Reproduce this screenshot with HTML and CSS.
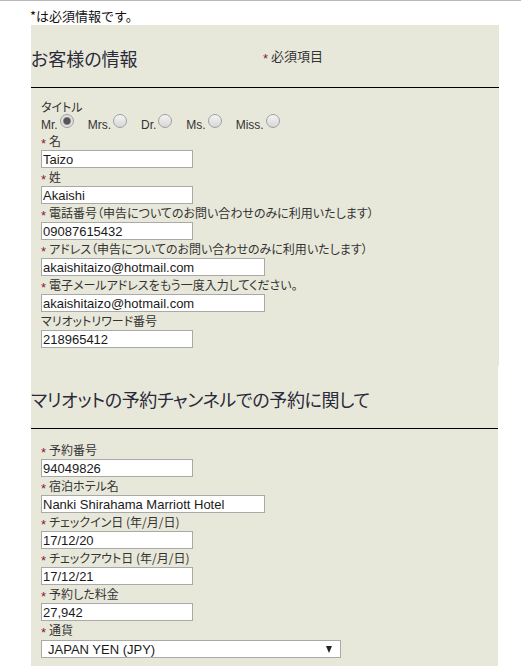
FILE: index.html
```html
<!DOCTYPE html>
<html lang="ja">
<head>
<meta charset="utf-8">
<title>お客様の情報</title>
<link rel="stylesheet" href="styles.css">
</head>
<body>
<p class="intro">*は必須情報です。</p>
<div class="panel">
  <section class="sec sec1">
    <div class="sec-head">
      <h2>お客様の情報</h2>
      <span class="req-note"><span class="ast">*</span>必須項目</span>
    </div>
    <div class="sec-body">
      <div class="label">タイトル</div>
      <div class="radios">
        <label class="opt"><span>Mr.</span><input type="radio" name="title" checked></label>
        <label class="opt"><span>Mrs.</span><input type="radio" name="title"></label>
        <label class="opt"><span>Dr.</span><input type="radio" name="title"></label>
        <label class="opt"><span>Ms.</span><input type="radio" name="title"></label>
        <label class="opt"><span>Miss.</span><input type="radio" name="title"></label>
      </div>
      <div class="label"><span class="ast">*</span>名</div>
      <input class="inp" type="text" value="Taizo">
      <div class="label"><span class="ast">*</span>姓</div>
      <input class="inp" type="text" value="Akaishi">
      <div class="label"><span class="ast">*</span>電話番号（申告についてのお問い合わせのみに利用いたします）</div>
      <input class="inp" type="text" value="09087615432">
      <div class="label"><span class="ast">*</span>アドレス（申告についてのお問い合わせのみに利用いたします）</div>
      <input class="inp wide" type="text" value="akaishitaizo@hotmail.com">
      <div class="label"><span class="ast">*</span>電子メールアドレスをもう一度入力してください。</div>
      <input class="inp wide" type="text" value="akaishitaizo@hotmail.com">
      <div class="label">マリオットリワード番号</div>
      <input class="inp" type="text" value="218965412">
    </div>
  </section>
  <section class="sec sec2">
    <div class="sec-head">
      <h2 class="long">マリオットの予約チャンネルでの予約に関して</h2>
    </div>
    <div class="sec-body">
      <div class="label"><span class="ast">*</span>予約番号</div>
      <input class="inp" type="text" value="94049826">
      <div class="label"><span class="ast">*</span>宿泊ホテル名</div>
      <input class="inp wide" type="text" value="Nanki Shirahama Marriott Hotel">
      <div class="label"><span class="ast">*</span>チェックイン日 (年/月/日)</div>
      <input class="inp" type="text" value="17/12/20">
      <div class="label"><span class="ast">*</span>チェックアウト日 (年/月/日)</div>
      <input class="inp" type="text" value="17/12/21">
      <div class="label"><span class="ast">*</span>予約した料金</div>
      <input class="inp" type="text" value="27,942">
      <div class="label"><span class="ast">*</span>通貨</div>
      <div class="sel-wrap">
        <select class="sel">
          <option>JAPAN YEN (JPY)</option>
        </select>
      </div>
    </div>
  </section>
</div>
</body>
</html>
```
FILE: styles.css
```css
body {
  margin: 0;
  border-top: 1px solid #b9b9b9;
  background: #fff;
  color: #333;
  font-family: "Liberation Sans", "Noto Sans CJK JP", sans-serif;
}

.intro {
  margin: 0;
  height: 24px;
  box-sizing: border-box;
  padding: 8px 0 0 30px;
  font: 13px/14px "Noto Sans CJK JP", sans-serif;
  color: #111;
}

.panel {
  margin-left: 31px;
  display: flex;
  flex-direction: column;
  align-items: flex-start;
}

.sec {
  background: #e8e8da;
}

.sec1 { width: 468px; }
.sec2 { width: 467px; }

.sec-head {
  height: 38px;
  padding-top: 24px;
  border-bottom: 1px solid #000;
  display: flex;
  align-items: flex-start;
}

.sec-head h2 {
  margin: 0;
  width: 232px;
  font: 400 18px/18px "Noto Sans CJK JP", sans-serif;
  font-feature-settings: "palt";
  color: #2a2a3a;
  white-space: nowrap;
}

.sec-head h2.long {
  width: auto;
  letter-spacing: -0.35px;
}

.req-note {
  font: 13px/14px "Noto Sans CJK JP", sans-serif;
  color: #333;
}

.ast {
  color: #8b1a35;
  font-family: "Liberation Sans", sans-serif;
  font-size: 13px;
  margin-right: 3px;
  vertical-align: -2px;
}

.sec-body {
  padding: 10px 0 18px 10px;
}

.sec2 .sec-body {
  padding-top: 12px;
}

.label {
  height: 18px;
  font: 12px/18px "Noto Sans CJK JP", sans-serif;
  font-feature-settings: "palt";
  color: #333;
  white-space: nowrap;
}

.radios {
  height: 16px;
  display: flex;
  font: 12px/14px "Liberation Sans", sans-serif;
  color: #333;
}

.opt {
  display: flex;
  align-items: flex-start;
  margin-right: 14px;
}

.opt span {
  padding-top: 2px;
}

.opt input {
  appearance: none;
  -webkit-appearance: none;
  flex: none;
  width: 14px;
  height: 14px;
  margin: -2px 0 0 2px;
  box-sizing: border-box;
  border: 1px solid #a0a0a0;
  border-radius: 50%;
  background: linear-gradient(#f4f4f4, #d6d6d6);
}

.opt input:checked {
  background: radial-gradient(circle, #555 0, #555 3px, #8f8f8f 3.6px, #e4e4e4 4.6px, #d8d8d8 7px);
}

.inp {
  display: block;
  box-sizing: border-box;
  width: 152px;
  height: 18px;
  margin: 0;
  padding: 0 1px;
  border: 1px solid #a9a9a9;
  background: #fff;
  font: 13px "Liberation Sans", sans-serif;
  color: #1a1a1a;
  outline: none;
}

.inp.wide {
  width: 224px;
}

.sel-wrap {
  position: relative;
  width: 300px;
  margin-top: 1px;
}

.sel {
  appearance: none;
  -webkit-appearance: none;
  display: block;
  box-sizing: border-box;
  width: 300px;
  height: 18px;
  margin: 0;
  padding: 0 0 0 6px;
  border: 1px solid #a9a9a9;
  border-radius: 0;
  background: #fff;
  font: 13px "Liberation Sans", sans-serif;
  color: #1a1a1a;
}

.sel-wrap::after {
  content: "";
  position: absolute;
  right: 9px;
  top: 6px;
  border-left: 3.5px solid transparent;
  border-right: 3.5px solid transparent;
  border-top: 7px solid #222;
}
```
